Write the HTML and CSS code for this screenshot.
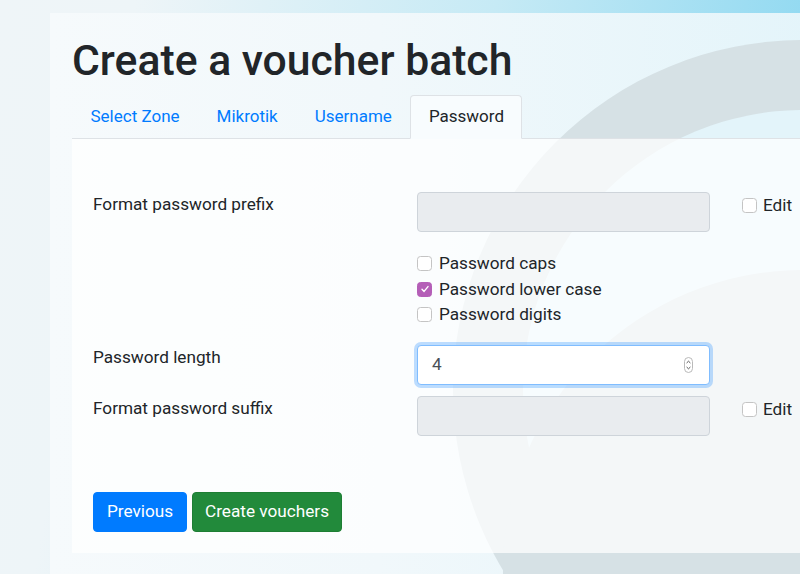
FILE: index.html
```html
<!DOCTYPE html>
<html lang="en">
<head>
<meta charset="utf-8">
<title>Create a voucher batch</title>
<link rel="stylesheet" href="styles.css">
</head>
<body>
<div class="page">
  <svg class="bg-logo" width="800" height="600" viewBox="50 13 800 600" aria-hidden="true">
    <circle cx="803" cy="390" r="350" fill="#d6e1e5"/>
    <circle cx="803" cy="390" r="280" fill="#e3f4fa"/>
    <circle cx="803" cy="570" r="300" fill="#d6e1e5"/>
  </svg>
  <h1 class="title">Create a voucher batch</h1>
  <ul class="tabs">
    <li class="tab"><a class="tab-link">Select Zone</a></li>
    <li class="tab"><a class="tab-link">Mikrotik</a></li>
    <li class="tab"><a class="tab-link">Username</a></li>
    <li class="tab active"><a class="tab-link">Password</a></li>
  </ul>
  <div class="card">
    <form class="card-body">
      <div class="row row-prefix">
        <label class="row-label">Format password prefix</label>
        <div class="field field-disabled"></div>
        <label class="check check-edit"><span class="box"></span><span>Edit</span></label>
      </div>
      <div class="row row-checks">
        <span class="row-label"></span>
        <div class="check-list">
          <label class="check"><span class="box"></span><span>Password caps</span></label>
          <label class="check"><span class="box checked"><svg width="10" height="10" viewBox="0 0 10 10"><path d="M2 5.2 L4.1 7.4 L8 2.6" fill="none" stroke="#fff" stroke-width="1.4" stroke-linecap="round" stroke-linejoin="round"/></svg></span><span>Password lower case</span></label>
          <label class="check"><span class="box"></span><span>Password digits</span></label>
        </div>
      </div>
      <div class="row row-length">
        <label class="row-label">Password length</label>
        <div class="field field-focus">
          <span class="field-value">4</span>
          <svg class="spinner" width="9" height="16" viewBox="0 0 9 16"><rect x="0.5" y="0.5" width="8" height="15" rx="4" fill="#fff" stroke="#b9b9b9"/><path d="M2.6 6 L4.5 4.2 L6.4 6" fill="none" stroke="#555" stroke-width="1"/><path d="M2.6 10 L4.5 11.8 L6.4 10" fill="none" stroke="#555" stroke-width="1"/></svg>
        </div>
      </div>
      <div class="row row-suffix">
        <label class="row-label">Format password suffix</label>
        <div class="field field-disabled"></div>
        <label class="check check-edit"><span class="box"></span><span>Edit</span></label>
      </div>
      <div class="actions">
        <button type="button" class="btn btn-primary">Previous</button>
        <button type="button" class="btn btn-success">Create vouchers</button>
      </div>
    </form>
  </div>
</div>
</body>
</html>
```
FILE: styles.css
```css
* { box-sizing: border-box; }
html, body { margin: 0; padding: 0; }
body {
  width: 800px;
  height: 574px;
  overflow: hidden;
  font-family: Roboto, "Liberation Sans", sans-serif;
  font-size: 17.2px;
  line-height: 25.5px;
  color: #212529;
  background: linear-gradient(100deg, #eff5f8 0%, #eef5f8 15%, #c6eaf5 55%, #84d5f0 100%);
}
.page {
  position: relative;
  margin: 13px 0 0 50px;
  width: 820px;
  height: 600px;
  padding: 22px 0 0 22px;
  background: linear-gradient(90deg, #f6fafc 0%, #f1f8fb 40%, #e2f4fa 100%);
}
.bg-logo {
  position: absolute;
  left: 0;
  top: 0;
  z-index: 0;
}
.title, .tabs, .card { position: relative; z-index: 1; }
.title {
  margin: 0 0 9px;
  font-size: 42.7px;
  line-height: 51px;
  font-weight: 500;
  color: #212529;
}
.tabs {
  display: flex;
  list-style: none;
  margin: 0;
  padding: 0;
  border-bottom: 1px solid #dee2e6;
  font-size: 17px;
}
.tab { margin-bottom: -1px; }
.tab-link {
  display: block;
  padding: 8px 17.5px 8.5px;
  border: 1px solid transparent;
  border-radius: 4px 4px 0 0;
  color: #007bff;
}
.tab.active .tab-link {
  color: #212529;
  background: #f8fcfe;
  border-color: #dee2e6 #dee2e6 #f8fcfe;
}
.card {
  width: 800px;
  height: 414px;
  background: rgba(255, 255, 255, 0.72);
}
.card-body {
  padding: 53px 21px 21px;
}
.row {
  display: grid;
  grid-template-columns: 324px 293px auto;
  align-items: start;
}
.row-prefix { margin-bottom: 18px; }
.row-checks { margin-bottom: 17px; }
.row-length { margin-bottom: 11px; }
.row-suffix { margin-bottom: 56px; }
.row-label { display: block; }
.field {
  height: 40px;
  border: 1px solid #ced4da;
  border-radius: 4px;
  background: #e9ecef;
}
.field-focus {
  display: flex;
  align-items: center;
  justify-content: space-between;
  padding: 0 16px 0 14px;
  background: #fff;
  border-color: #80bdff;
  box-shadow: 0 0 0 3px rgba(0, 123, 255, 0.25);
  color: #495057;
}
.spinner { display: block; margin-top: 1px; }
.check-list { display: flex; flex-direction: column; padding-top: 1px; }
.check {
  display: flex;
  align-items: center;
  gap: 7px;
  height: 25.5px;
}
.check-edit { margin: 1px 0 0 32px; gap: 6px; }
.box {
  width: 15px;
  height: 15px;
  border: 1px solid #c4c4c4;
  border-radius: 3.5px;
  background: #fff;
  display: flex;
  align-items: center;
  justify-content: center;
  flex: none;
}
.box.checked {
  background: #b45eb7;
  border-color: #b45eb7;
}
.box svg { display: block; }
.actions { display: flex; gap: 5px; }
.btn {
  font-family: inherit;
  font-size: 17.2px;
  line-height: 25.5px;
  height: 40px;
  padding: 0;
  white-space: nowrap;
  border: 1px solid transparent;
  border-radius: 4px;
  color: #fff;
  cursor: pointer;
}
.btn-primary { background: #007bff; border-color: #007bff; width: 94px; }
.btn-success { background: #228a3b; border-color: #1e7e34; width: 150px; }
```
